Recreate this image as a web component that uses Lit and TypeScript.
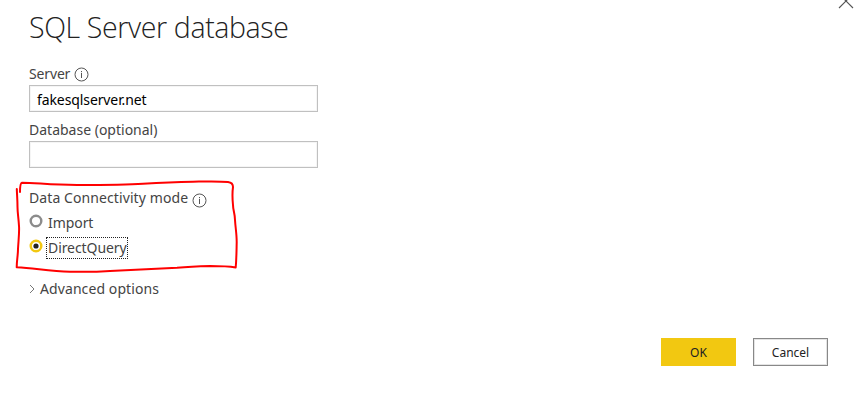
import { LitElement, html, css, svg } from "lit";
import { customElement, property } from "lit/decorators.js";

@customElement("info-icon")
class InfoIcon extends LitElement {
  static styles = css`
    :host { display: block; width: 15px; height: 15px; }
    svg { display: block; }
  `;
  render() {
    return html`<svg width="15" height="15" viewBox="0 0 15 15">
      <circle cx="7.5" cy="7.5" r="6.5" fill="none" stroke="#555" />
      <path d="M7.5 6v5M7.5 4v1.2" stroke="#555" fill="none" />
    </svg>`;
  }
}

@customElement("radio-option")
class RadioOption extends LitElement {
  @property({ type: Boolean }) checked = false;
  static styles = css`
    :host { display: flex; align-items: center; height: 25px; }
    svg { display: block; margin: -3px 3px 0 0; }
    .label { box-sizing: border-box; height: 22px; line-height: 20px; padding: 0 0 0 1px; border: 1px solid transparent; white-space: nowrap; letter-spacing: -0.07px; }
    .focus { border: 1px dotted #222; }
  `;
  render() {
    return html`<svg width="14" height="14" viewBox="0 0 14 14">
        <circle cx="7" cy="7" r="5.3" fill="#fff" stroke=${this.checked ? "#f2c811" : "#8c8c8c"} stroke-width="2.4" />
        ${this.checked ? svg`<circle cx="7" cy="7" r="2.6" fill="#222" />` : ""}
      </svg>
      <span class="label ${this.checked ? "focus" : ""}"><slot></slot></span>`;
  }
}

@customElement("app-root")
class AppRoot extends LitElement {
  static styles = css`
    :host {
      display: block; position: relative; width: 857px; height: 403px; overflow: hidden;
      box-sizing: border-box; background: #fff; padding: 6px 29px 0;
      font: 14px/20px "Noto Sans", "Open Sans", sans-serif; color: #444;
    }
    .title { margin: 0; height: 42px; font: 300 28.5px/42px "Open Sans", "Noto Sans", sans-serif; color: #222; white-space: nowrap; letter-spacing: -0.37px; }
    .field-label { display: flex; gap: 4px; align-items: center; height: 20px; white-space: nowrap; }
    .server { margin-top: 16px; }
    .database { margin-top: 8px; }
    .input { display: flex; align-items: center; box-sizing: border-box; width: 289px; height: 27px; margin-top: 1px; padding: 2px 7px 0; border: 1px solid #c0c0c0; box-shadow: inset 0 0 0 1px #f5f5f5; color: #000; }
    .mode { margin-top: 20px; }
    .mode info-icon { margin-top: 4px; }
    .options { margin-top: 2px; }
    .advanced { display: flex; align-items: center; gap: 5px; margin-top: 19px; height: 20px; }
    .actions { display: flex; justify-content: flex-end; gap: 17px; margin-top: 39px; }
    .button { box-sizing: border-box; width: 75px; height: 28px; font-size: 12px; line-height: 29px; text-align: center; color: #222; }
    .primary { background: #f2c811; }
    .secondary { border: 1px solid #888; line-height: 27px; box-shadow: inset 0 0 0 1px #e4e4e4; }
    .close { position: absolute; top: -8px; left: 838px; }
    .mark { position: absolute; left: 0; top: 0; pointer-events: none; }
    .host { letter-spacing: -0.1px; }
    .wide { letter-spacing: 0.09px; }
    .tight { letter-spacing: -0.15px; }
  `;
  render() {
    return html`
      <h1 class="title">SQL Server database</h1>
      <div class="field-label server"><span class="tight">Server</span><info-icon></info-icon></div>
      <div class="input"><span class="host">fakesqlserver.net</span></div>
      <div class="field-label database"><span>Database (optional)</span></div>
      <div class="input"></div>
      <div class="field-label mode"><span class="wide">Data Connectivity mode</span><info-icon></info-icon></div>
      <div class="options">
        <radio-option>Import</radio-option>
        <radio-option checked>DirectQuery</radio-option>
      </div>
      <div class="advanced">
        <svg width="6" height="10" viewBox="0 0 6 10"><path d="M1 1l4 4-4 4" fill="none" stroke="#777" /></svg>
        <span class="wide">Advanced options</span>
      </div>
      <div class="actions"><div class="button primary">OK</div><div class="button secondary">Cancel</div></div>
      <svg class="close" width="16" height="17" viewBox="0 0 16 17"><path d="M1 2l14 14M15 2L1 16" fill="none" stroke="#555" stroke-width="1.1" /></svg>
      <svg class="mark" width="250" height="280" viewBox="0 0 250 280" fill="none" stroke="#f00" stroke-width="2" stroke-linecap="round" stroke-linejoin="round">
        <path d="M20 192C20 188 20.500 183 22 182.700C36 182.700 50 185 77 185C100 185 125 185 143 183.700C165 182.500 180 182 193 181.700C205 181.500 218 181 228 182C232 182.500 233 184 233 187C232 194 232.500 200 233 205C233 210 235 214 235 220C235.500 228 236.700 234 236.700 242C236.500 251 236.500 259 235.700 267.500C227 266 219 266 210 266C195 266.500 186 267 177 267.700C150 269 130 270 110 271C95 272 82 272 70 271.700C50 271 36 268.500 16.700 267.200C16.700 261 18 255 18 249C18.500 240 19.500 232 19 226C18.500 217 17.500 213 17.500 207C17.500 200 17 195 16.800 189" />
      </svg>`;
  }
}
